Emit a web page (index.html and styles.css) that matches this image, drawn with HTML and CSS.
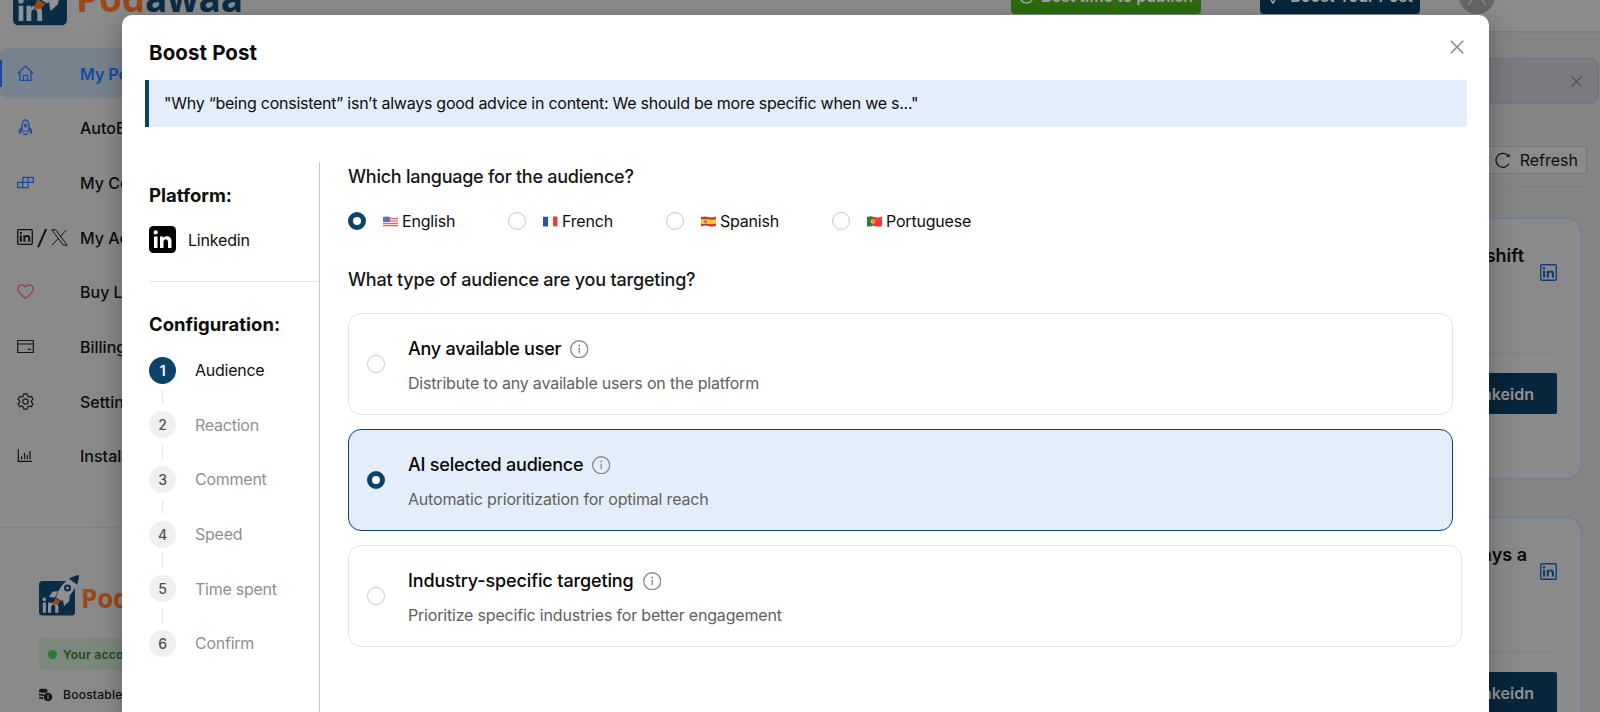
FILE: index.html
```html
<!DOCTYPE html>
<html lang="en">
<head>
<meta charset="utf-8">
<title>Boost Post</title>
<link rel="stylesheet" href="styles.css">
</head>
<body>
<svg class="defs" width="0" height="0" aria-hidden="true">
  <symbol id="info" viewBox="0 0 18 18"><circle cx="9" cy="9" r="8.3" fill="none" stroke="#8a8a8a" stroke-width="1.3"/><path d="M9 7.6v5.2" stroke="#8a8a8a" stroke-width="1.3"/><circle cx="9" cy="5.3" r=".95" fill="#8a8a8a"/></symbol>
  <symbol id="close" viewBox="0 0 14 14"><path d="M.8.8l12.4 12.4M13.2.8L.8 13.2" fill="none" stroke="currentColor" stroke-width="1.5"/></symbol>
  <symbol id="in-outline" viewBox="0 0 17 17"><rect x=".75" y=".75" width="15.5" height="15.5" rx="1" fill="none" stroke="currentColor" stroke-width="1.4"/><rect x="3" y="6.7" width="2.1" height="6.9" fill="currentColor"/><circle cx="4.05" cy="4.3" r="1.25" fill="currentColor"/><path d="M6.8 6.7h2v1c1.3-2 5.2-1.7 5.2 1.8v4.1h-2.1V9.9c0-2-3-2-3 0v3.7H6.8z" fill="currentColor"/></symbol>
  <symbol id="logo" viewBox="0 0 40 42">
    <rect x="0" y="7" width="36" height="34.5" rx="3.5" fill="#0a2c45"/>
    <rect x="3.8" y="28.5" width="3.1" height="10.2" fill="#8e9296"/><circle cx="5.3" cy="25.4" r="1.8" fill="#8e9296"/>
    <path d="M9 28.5h3v1.3c2.5-2.8 7.4-1.8 7.4 3v5.9h-3.2v-5.6c0-3-4-3-4 0v5.6H9z" fill="#8e9296"/>
    <path d="M19 17l-5.500.8-3.500 5.200 6 .5zM31 21.500l-1 6-5 4.500-1-6z" fill="#8e9296"/>
    <path d="M17 23.500C20 13 27 4 39 1.500 39 12 33 22 22.500 27z" fill="#8e9296"/>
    <path d="M30 5C32.500 3 36 1.500 40 1c0 3-.5 6-2 9.500z" fill="#0a2c45"/>
    <circle cx="28.500" cy="14" r="3.500" fill="#0a2c45"/><circle cx="28.500" cy="14" r="1.500" fill="#8e9296"/>
    <path d="M16.500 24l5 3.500-3 3-5 .3z" fill="#9a4818"/>
  </symbol>
</svg>

<div class="page">
  <header class="topbar">
    <div class="brand"><svg width="60" height="63"><use href="#logo"/></svg><span class="wordmark"><b>Pod</b>awaa</span></div>
    <div class="top-actions">
      <div class="top-btn green"><svg width="15" height="15" viewBox="0 0 15 15"><circle cx="7.500" cy="7.500" r="6.500" fill="none" stroke="currentColor" stroke-width="1.500"/><path d="M7.500 4v4h3" fill="none" stroke="currentColor"/></svg><span>Best time to publish</span></div>
      <div class="top-btn navy"><svg width="12" height="15" viewBox="0 0 12 15"><path d="M3 10C2 6 3 3 6 1c3 2 4 5 3 9zM4 11l2 3 2-3" fill="none" stroke="currentColor" stroke-width="1.500"/></svg><span>Boost Your Post</span></div>
      <div class="avatar"><svg width="36" height="36" viewBox="0 0 36 36"><circle cx="18" cy="18" r="18" fill="#666"/><circle cx="18" cy="13" r="5" fill="none" stroke="#8a8a8a" stroke-width="1.500"/><path d="M10 27c2-9 14-9 16 0" fill="none" stroke="#8a8a8a" stroke-width="1.500"/></svg></div>
      <span class="account">Podawaa Demoy</span>
    </div>
  </header>

  <div class="body">
    <aside class="sidebar">
      <nav class="menu">
        <div class="item active"><span class="ico"><svg width="17" height="17" viewBox="0 0 17 17" fill="none" stroke="#1648a0" stroke-width="1.200"><path d="M.8 8.500L8.500 1l7.700 7.500M3 7v8.300h11V7M6.500 15.300v-5h4v5"/></svg></span><span>My Posts</span></div>
        <div class="item"><span class="ico"><svg width="17" height="17" viewBox="0 0 17 17" fill="none" stroke="#1648a0" stroke-width="1.200"><path d="M5 12V5c.3-2 1.700-3.500 3.500-4.400C10.300 1.500 11.700 3 12 5v7zM5 8.500l-2.500 2.700V14L5 12M12 8.500l2.500 2.700V14L12 12M6.500 14.200c.3 2 3.700 2 4 0"/><circle cx="8.500" cy="6.500" r="1.300"/></svg></span><span>AutoBoost</span></div>
        <div class="item"><span class="ico"><svg width="17" height="17" viewBox="0 0 17 17" fill="none" stroke="#1648a0" stroke-width="1.200"><path d="M5.800 3.300h10.500v5.100H5.800zM.7 8.400h10.300v5.200H.7zM11 3.300v5.100M5.800 8.400v5.200"/></svg></span><span>My Comments</span></div>
        <div class="item"><span class="ico pair"><svg class="ink" width="16" height="16"><use href="#in-outline"/></svg><i>/</i><svg width="17" height="17" viewBox="0 0 17 17" fill="none" stroke="#111"><path d="M.8.8h3.900l11.500 15.400h-3.900zM1 16.200l6.300-6.800M15.500.8L9.300 7.500"/></svg></span><span>My Accounts</span></div>
        <div class="item"><span class="ico"><svg width="17" height="17" viewBox="0 0 17 17" fill="none" stroke="#93365f" stroke-width="1.200"><path d="M8.500 15.300C3 11.200.8 8.500.8 5.700c0-4 5.400-5.300 7.700-1.700 2.300-3.600 7.700-2.300 7.700 1.700 0 2.800-2.200 5.500-7.700 9.600z"/></svg></span><span>Buy Likes</span></div>
        <div class="item"><span class="ico"><svg width="17" height="17" viewBox="0 0 17 17" fill="none" stroke="#171717" stroke-width="1.200"><path d="M.7 2.500h15.600v12H.7zM.7 6h15.600M10.800 11.400h3.200"/></svg></span><span>Billing</span></div>
        <div class="item"><span class="ico"><svg width="17" height="17" viewBox="0 0 17 17" fill="none" stroke="#171717" stroke-width="1.200" stroke-linejoin="round"><path d="M6.800.9h3.400l.6 2.200 1.300.8 2.200-.6L16 6.200l-1.600 1.600v1.400L16 10.800l-1.700 2.900-2.200-.6-1.300.8-.6 2.200H6.800l-.6-2.200-1.300-.8-2.200.6L1 10.800l1.600-1.600V7.800L1 6.200l1.700-2.900 2.200.6 1.300-.8z"/><circle cx="8.500" cy="8.500" r="2.700"/></svg></span><span>Settings</span></div>
        <div class="item"><span class="ico"><svg width="17" height="17" viewBox="0 0 17 17" fill="none" stroke="#111" stroke-width="1.200"><path d="M1.300 2v12.300H15M4.500 12.200V9.500M7.500 12.200V6M10.300 12.200V8M13 12.200V4"/></svg></span><span>Install</span></div>
      </nav>
      <div class="side-foot">
        <div class="brand small"><svg width="40" height="42"><use href="#logo"/></svg><span class="wordmark"><b>Pod</b>awaa</span></div>
        <div class="status"><span class="dot"></span>Your account</div>
        <div class="boostable"><svg width="14" height="14" viewBox="0 0 14 14"><path d="M0 2.200C.5.300 8 .3 8.500 2.200v1.500c-1 1.500-7.500 1.500-8.500 0zM0 5.200c1 1 4 1.200 5.500 1L4.500 8C3 8 1 8 0 7.300zM0 8.500c1 .6 2.500.8 4 .8v1.900c-1.500 0-3-.2-4-.9z" fill="#161616"/><circle cx="9" cy="9" r="4.300" fill="#161616"/><path d="M9 6.800v4.500" stroke="#8a8a8a"/></svg><span>Boostable</span></div>
      </div>
    </aside>

    <main class="content">
      <div class="alert"><svg width="11" height="11"><use href="#close"/></svg></div>
      <div class="tools"><div class="refresh"><svg width="16" height="17" viewBox="0 0 16 17" fill="none" stroke="#161616" stroke-width="1.300"><path d="M14.200 11.500A7 7 0 1 1 13.600 4.200"/><path d="M14.600 1.800v3.300h-3.300z" fill="#161616" stroke="none"/></svg>Refresh</div></div>
      <section class="post">
        <div class="post-head"><h3>shift</h3><svg width="17" height="17"><use href="#in-outline"/></svg></div>
        <div class="post-foot"><div class="view">Linkeidn</div></div>
      </section>
      <section class="post">
        <div class="post-head second"><h3>always a</h3><svg width="17" height="17"><use href="#in-outline"/></svg></div>
        <div class="post-foot"><div class="view">Linkeidn</div></div>
      </section>
    </main>
  </div>
</div>

<div class="modal" role="dialog">
  <div class="modal-head"><h1>Boost Post</h1><svg width="14" height="14"><use href="#close"/></svg></div>
  <div class="quote"><span>"Why “being consistent” isn’t always good advice in content: We should be more specific when we s..."</span></div>
  <div class="columns">
    <div class="left">
      <h2>Platform:</h2>
      <div class="platform"><svg width="27" height="27" viewBox="0 0 27 27"><rect width="27" height="27" rx="4.500" fill="#000"/><rect x="5" y="10.500" width="3.500" height="11.500" fill="#fff"/><circle cx="6.700" cy="6.400" r="2.100" fill="#fff"/><path d="M11 10.500h3.300v1.600c2.200-3.100 8.200-2.400 8.200 3V22H19v-6.100c0-3.500-4.500-3.500-4.500 0V22H11z" fill="#fff"/></svg><span>Linkedin</span></div>
      <h2 class="config">Configuration:</h2>
      <ol class="steps">
        <li class="on"><b>1</b><span>Audience</span></li>
        <li><b>2</b><span>Reaction</span></li>
        <li><b>3</b><span>Comment</span></li>
        <li><b>4</b><span>Speed</span></li>
        <li><b>5</b><span>Time spent</span></li>
        <li><b>6</b><span>Confirm</span></li>
      </ol>
    </div>
    <div class="right">
      <h4>Which language for the audience?</h4>
      <div class="langs">
        <label class="en"><i class="radio checked"></i><svg width="15" height="11" viewBox="0 0 15 11"><path d="M0 1Q4 0 7.500 1T15 .5V10Q11 11 7.500 10T0 10.500z" fill="#f3dcdc"/><path d="M0 2.500h15M0 5h15M0 7.500h15M0 9.600h15" stroke="#d8696e" stroke-width="1.100"/><path d="M0 1Q4 0 7 1v5H0z" fill="#5b78b4"/></svg><span>English</span></label>
        <label class="fr"><i class="radio"></i><svg width="15" height="11" viewBox="0 0 15 11"><path d="M0 .8h5v9.700H0z" fill="#2457a6"/><path d="M5 .8h5v9.700H5z" fill="#f5f5f5"/><path d="M10 .5h4.500v9.700H10z" fill="#e5403f"/></svg><span>French</span></label>
        <label class="es"><i class="radio"></i><svg width="15" height="11" viewBox="0 0 15 11"><path d="M0 1Q4 0 7.500 1T15 .5V10Q11 11 7.500 10T0 10.500z" fill="#c43a2c"/><path d="M0 3.300Q4 2.500 7.500 3.300T15 3v4.700Q11 8.500 7.500 7.900T0 8.300z" fill="#f3c640"/><circle cx="4.500" cy="5.500" r="1.500" fill="#ba6b35"/></svg><span>Spanish</span></label>
        <label class="pt"><i class="radio"></i><svg width="15" height="11" viewBox="0 0 15 11"><path d="M0 1Q4 0 7.500 1T15 .5V10Q11 11 7.500 10T0 10.500z" fill="#ee3b33"/><path d="M0 1Q3 .3 5.500.7v9.600L0 10.500z" fill="#327b3b"/><circle cx="5.800" cy="5.500" r="2.200" fill="#e3bd4c"/><circle cx="5.800" cy="5.500" r="1" fill="#d86d52"/></svg><span>Portuguese</span></label>
      </div>
      <h4 class="type">What type of audience are you targeting?</h4>
      <div class="cards">
        <div class="card"><i class="radio"></i><div><div class="title"><span>Any available user</span><svg width="18.500" height="18.500"><use href="#info"/></svg></div><p>Distribute to any available users on the platform</p></div></div>
        <div class="card selected"><i class="radio checked"></i><div><div class="title"><span>AI selected audience</span><svg width="18.500" height="18.500"><use href="#info"/></svg></div><p>Automatic prioritization for optimal reach</p></div></div>
        <div class="card wide"><i class="radio"></i><div><div class="title"><span>Industry-specific targeting</span><svg width="18.500" height="18.500"><use href="#info"/></svg></div><p>Prioritize specific industries for better engagement</p></div></div>
      </div>
    </div>
  </div>
</div>
</body>
</html>
```
FILE: styles.css
```css
* { box-sizing: border-box; margin: 0; padding: 0; }
body { width: 1600px; height: 712px; overflow: hidden; position: relative; font-family: Inter, "Liberation Sans", sans-serif; font-size: 16px; color: #0d0d0d; background: #858585; }
svg { display: block; flex: none; }
.defs { position: absolute; }
.page { width: 1600px; height: 712px; overflow: hidden; display: flex; flex-direction: column; }

.topbar { height: 31px; flex: none; background: #8b8b8b; display: flex; justify-content: space-between; align-items: flex-end; box-shadow: 0 1px 2px rgba(0,0,0,.1); }
.brand { display: flex; align-items: flex-end; color: #0a2c45; }
.brand b { color: #9a4818; font-weight: inherit; }
.topbar .brand { padding: 0 0 5px 13px; }
.wordmark { font: 700 37px/40px "Open Sans", sans-serif; letter-spacing: -.2px; margin: 0 0 8px 3px; }
.top-actions { display: flex; align-items: flex-end; padding-bottom: 17px; color: #a3a3a3; }
.top-btn { height: 36px; display: flex; gap: 7px; align-items: center; justify-content: center; border-radius: 4px; font-weight: 600; white-space: nowrap; }
.green { width: 190px; background: #2d6b10; margin-right: 59px; }
.navy { width: 160px; background: #07253b; margin-right: 39px; gap: 11px; }
.account { color: #1a1a1a; width: 96px; margin-left: 9px; line-height: 37px; font-size: 13px; white-space: nowrap; }

.body { flex: 1; min-height: 0; display: flex; justify-content: space-between; }
.sidebar { width: 122px; overflow: hidden; background: #8a8a8a; padding-top: 17px; font-weight: 500; }
.menu { height: 480px; display: flex; flex-direction: column; gap: 4.700px; border-bottom: 1px solid #808080; }
.item { height: 50px; flex: none; display: flex; align-items: center; padding: 1px 0 0 17px; white-space: nowrap; color: #0c0c0c; }
.item.active { background: #78828c linear-gradient(#1648a0, #1648a0) 0 12px / 2px 27px no-repeat; color: #1648a0; border-radius: 8px 0 0 8px; font-weight: 600; }
.ico { width: 63px; flex: none; display: flex; align-items: center; }
.ico svg { margin-top: -1px; }
.pair { gap: 5px; }
.pair i { font: italic 500 21px/20px Inter, sans-serif; }
.ink { color: #111; }
.side-foot { padding: 46px 0 0 39px; }
.small .wordmark { font-size: 26px; line-height: 32px; margin: 0 0 2px 2px; }
.status { margin-top: 22px; height: 32px; width: 180px; background: #7c887d; border-radius: 5px; color: #164d1a; font-weight: 600; font-size: 12px; display: flex; align-items: center; gap: 6px; padding-left: 9px; letter-spacing: .3px; }
.dot { width: 9px; height: 9px; border-radius: 50%; background: #2b7a31; }
.boostable { display: flex; gap: 10px; align-items: center; font-size: 12px; margin-top: 17px; letter-spacing: .25px; }

.content { width: 111px; padding-top: 27px; }
.alert { height: 46px; margin: 0 1px 0 -20px; background: #7a7b80; border: 1px solid #71747c; border-radius: 9px; display: flex; align-items: center; justify-content: flex-end; padding-right: 16px; color: #4b4b4b; }
.tools { height: 83px; margin-right: 13px; padding-top: 42px; border-bottom: 1px solid #7f7f7f; display: flex; justify-content: flex-end; }
.refresh { height: 28px; border: 1px solid #71767a; background: #8b8b8b; display: flex; gap: 9px; align-items: center; padding: 0 8px 0 10px; border-radius: 2px; }
.post { height: 263px; margin: 30px 17px 0 -60px; border: 2px solid #767f94; border-radius: 17px; background: #8a8a8a; padding: 0 24px; }
.post + .post { margin-top: 36px; }
.post-head { height: 135px; border-bottom: 1px solid #7f7f7f; padding-top: 26px; display: flex; justify-content: flex-end; gap: 16px; color: #0c3d79; }
.post-head h3 { font-size: 18px; line-height: 22px; font-weight: 600; color: #0b0b0b; white-space: nowrap; }
.post-head.second { gap: 13px; }
.post-head svg { margin-top: 19px; }
.post-foot { padding-top: 19px; display: flex; justify-content: flex-end; }
.view { height: 41px; line-height: 42px; padding: 0 23px; background: #07253b; color: #929292; font-weight: 600; border-radius: 2px; }

.modal { position: absolute; left: 122px; top: 15px; width: 1367px; height: 697px; overflow: hidden; background: #fff; border-radius: 10px 10px 0 0; box-shadow: 0 6px 16px rgba(0,0,0,.16), 0 9px 28px 8px rgba(0,0,0,.1); padding: 0 22px 0 23px; }
.modal-head { height: 65px; display: flex; justify-content: space-between; padding: 25px 3px 0 4px; color: #858585; }
.modal-head h1 { font-size: 20.500px; line-height: 26px; font-weight: 700; color: #0b0b0b; letter-spacing: .1px; }
.quote { height: 47px; background: #e4eefa; border-left: 4px solid #0a4268; padding-left: 15px; line-height: 47px; white-space: nowrap; letter-spacing: -.25px; }
.columns { display: flex; margin-top: 35px; }
.left { width: 175px; padding-left: 4px; height: 550px; border-right: 1px solid #c6c6c6; }
h2 { font-size: 18.500px; line-height: 24px; font-weight: 700; }
.left h2 { margin-top: 21px; }
.platform { display: flex; gap: 12px; align-items: center; margin-top: 19px; padding-bottom: 28px; border-bottom: 1px solid #e8e8e8; letter-spacing: -.2px; }
.left h2.config { margin-top: 30px; }
.steps { list-style: none; margin-top: 20.500px; letter-spacing: -.25px; }
.steps li { display: grid; grid-template-columns: 27px 1fr; column-gap: 19px; align-items: center; height: 54.700px; grid-template-rows: 27px 27.700px; color: #8f8f8f; }
.steps b { height: 27px; border-radius: 50%; background: #f0f0f0; color: #505050; font-size: 14px; line-height: 28px; text-align: center; font-weight: 500; }
.steps li::after { content: ""; width: 1px; height: 14px; background: #e5e5e5; margin-left: 13px; }
.steps li:last-child { height: 27px; grid-template-rows: 27px; }
.steps li:last-child::after { display: none; }
.steps .on { color: #111; }
.steps .on b { background: #0a4268; color: #fff; font-weight: 600; }
.right { padding-left: 28px; flex: 1; }
h4 { font-size: 18px; line-height: 24px; font-weight: 500; color: #161616; margin-top: 3px; letter-spacing: -.25px; }
.langs { display: flex; margin-top: 22px; height: 20px; letter-spacing: -.2px; }
.langs label { display: flex; align-items: center; }
.langs svg { margin: 0 4px 0 17px; }
.en { width: 160px; } .fr { width: 158px; } .es { width: 166px; }
.radio { width: 18px; height: 18px; border-radius: 50%; border: 1px solid #bccbd9; background: #fff; flex: none; }
.radio.checked { border: 5.500px solid #0a4268; }
h4.type { margin-top: 37px; letter-spacing: -.2px; }
.cards { margin-top: 21px; display: flex; flex-direction: column; gap: 14px; }
.card { width: 1105px; height: 102px; border: 1px solid #e4e4e4; border-radius: 13px; display: flex; align-items: center; gap: 23px; padding-left: 18px; }
.card.wide { width: 1114px; }
.card.selected { background: #e4eefa; border-color: #0a4268; }
.title { display: flex; align-items: center; gap: 9px; font-size: 18px; line-height: 24px; font-weight: 500; color: #060606; margin-top: 3px; letter-spacing: -.22px; }
.card.wide .title { letter-spacing: -.13px; }
.card p { margin-top: 11px; line-height: 22px; color: #616161; letter-spacing: -.19px; }
```
